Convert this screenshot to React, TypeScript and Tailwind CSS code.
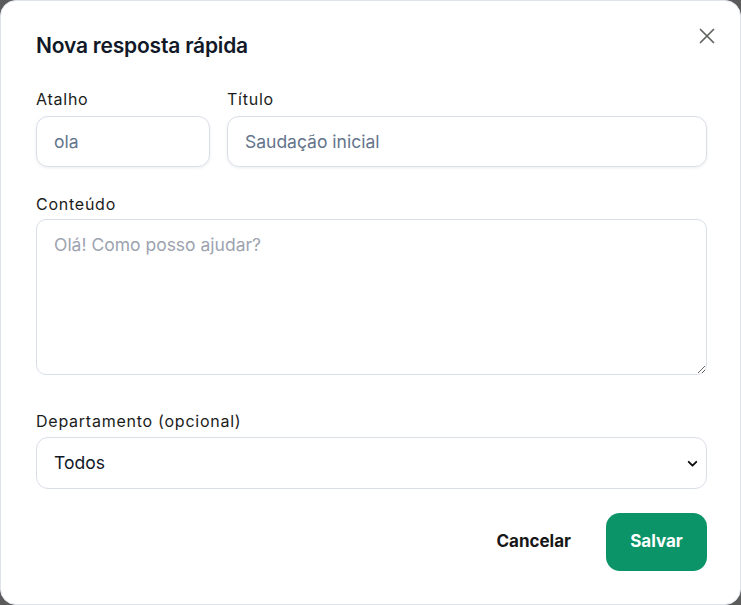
import React from 'react';

const labelCls = 'text-[16px] leading-[20px] font-normal text-[#1a1c1b] tracking-[0.75px]';
const inputCls =
  'h-[51px] w-full rounded-xl border border-[#d9dee8] px-[17px] text-[17.5px] outline-none shadow-[0_1px_3px_rgba(15,23,42,0.08)] placeholder:text-[#64748b]';

function App() {
  return (
    <div className="w-[741px] h-[605px] bg-[#5b5b5b]" style={{ fontFamily: 'Inter, "Noto Sans", sans-serif' }}>
      <div className="w-full h-full bg-white rounded-2xl border border-[#dfe3ec] pl-[35px] pr-[33px] pt-[31px] flex flex-col">
        {/* Header */}
        <div className="flex items-start justify-between">
          <h2 className="text-[21px] leading-[28px] font-semibold text-[#111827] tracking-[-0.2px]">Nova resposta rápida</h2>
          <button className="mt-[-9px] mr-[-13px] text-[#5f6660]">
            <svg width="26" height="26" viewBox="0 0 24 24" fill="none" stroke="currentColor" strokeWidth="1.6" strokeLinecap="round">
              <path d="M18 6 6 18" />
              <path d="m6 6 12 12" />
            </svg>
          </button>
        </div>

        {/* Atalho + Titulo */}
        <div className="flex gap-[17px] mt-[29px]">
          <div className="w-[174px] flex flex-col">
            <label className={labelCls}>Atalho</label>
            <input placeholder="ola" className={`mt-[7px] ${inputCls}`} />
          </div>
          <div className="flex-1 flex flex-col">
            <label className={labelCls}>Título</label>
            <input placeholder="Saudação inicial" className={`mt-[7px] ${inputCls}`} />
          </div>
        </div>

        {/* Conteudo */}
        <div className="flex flex-col mt-[27px]">
          <label className={labelCls}>Conteúdo</label>
          <textarea
            placeholder="Olá! Como posso ajudar?"
            className="mt-[5px] h-[156px] w-full rounded-[10px] border border-[#d9dee8] px-[17px] py-[13px] text-[17.5px] leading-[24px] placeholder:text-[#9ca3af] outline-none"
          />
        </div>

        {/* Departamento */}
        <div className="flex flex-col mt-[36px]">
          <label className={labelCls}>Departamento (opcional)</label>
          <div className="relative mt-[6px]">
            <select className="appearance-none h-[52px] w-full rounded-xl border border-[#d9dee8] bg-white px-[17px] text-[17.5px] text-[#111827] outline-none">
              <option>Todos</option>
            </select>
            <svg className="absolute right-[8px] top-[20px] pointer-events-none" width="13" height="13" viewBox="0 0 24 24" fill="none" stroke="#111" strokeWidth="3.5" strokeLinecap="round" strokeLinejoin="round">
              <path d="m5 9 7 7 7-7" />
            </svg>
          </div>
        </div>

        {/* Actions */}
        <div className="flex justify-end items-center gap-[12px] mt-[24px]">
          <button className="h-[58px] px-[23px] text-[17px] font-bold text-[#171717]">Cancelar</button>
          <button className="h-[58px] w-[101px] rounded-[14px] bg-[#0a9467] text-[17px] font-bold text-white">Salvar</button>
        </div>
      </div>
    </div>
  );
}

export default App;
